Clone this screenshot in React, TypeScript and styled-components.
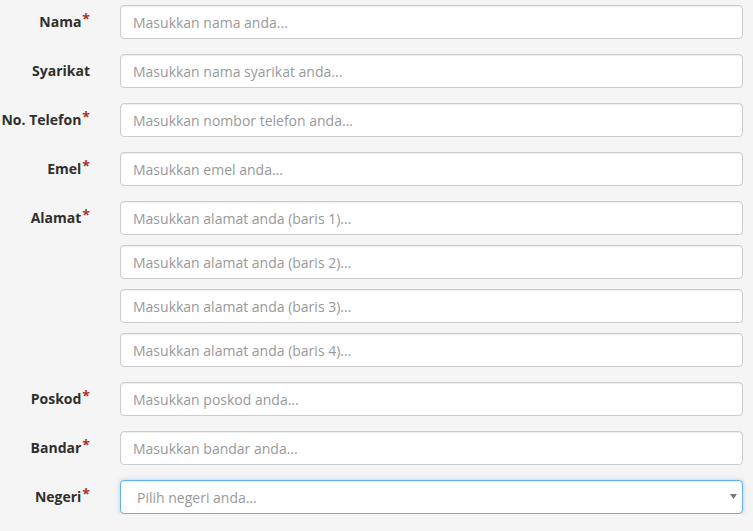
import React from "react";
import styled, { createGlobalStyle } from "styled-components";

const Global = createGlobalStyle`
  html, body { margin: 0; padding: 0; background: #f5f5f5; }
  body { font-family: "Open Sans", "Liberation Sans", sans-serif; font-size: 14px; color: #333; }
  * { box-sizing: border-box; }
`;

const Form = styled.form`
  display: flex;
  flex-direction: column;
  gap: 15px;
  padding: 5px 10px 0 0;
`;

const Row = styled.div`
  display: grid;
  grid-template-columns: 90px 1fr;
  column-gap: 30px;
  align-items: start;
`;

const Label = styled.label`
  display: block;
  text-align: right;
  font-weight: 700;
  font-size: 14px;
  line-height: 20px;
  padding-top: 7px;
  color: #2f2f2f;
  white-space: nowrap;
`;

const Star = styled.span`
  color: #a83232;
  font-size: 14px;
  font-weight: 700;
  position: relative;
  top: -3px;
  margin-left: 1px;
`;

const Fields = styled.div`
  display: flex;
  flex-direction: column;
  gap: 10px;
`;

const Input = styled.input`
  display: block;
  width: 100%;
  height: 34px;
  padding: 6px 12px;
  font-family: "Open Sans", "Liberation Sans", sans-serif;
  font-size: 14px;
  line-height: 20px;
  color: #555;
  background: #fff;
  border: 1px solid #ccc;
  border-radius: 4px;
  box-shadow: inset 0 1px 1px rgba(0, 0, 0, 0.075);
  outline: none;
  &::placeholder { color: #999; }
`;

const SelectWrap = styled.div`
  position: relative;
`;

const Select = styled.select`
  display: block;
  width: 100%;
  height: 34px;
  padding: 6px 30px 6px 16px;
  font-family: "Open Sans", "Liberation Sans", sans-serif;
  font-size: 14px;
  color: #999;
  background: #fff;
  border: 1px solid #66afe9;
  border-radius: 4px;
  box-shadow: inset 0 1px 1px rgba(0, 0, 0, 0.075), 0 0 4px rgba(102, 175, 233, 0.5);
  appearance: none;
  -webkit-appearance: none;
  outline: none;
`;

const Caret = styled.svg`
  position: absolute;
  right: 6px;
  top: 14px;
  pointer-events: none;
`;

type F = { label: string; required?: boolean; placeholders: string[] };

const fields: F[] = [
  { label: "Nama", required: true, placeholders: ["Masukkan nama anda..."] },
  { label: "Syarikat", placeholders: ["Masukkan nama syarikat anda..."] },
  { label: "No. Telefon", required: true, placeholders: ["Masukkan nombor telefon anda..."] },
  { label: "Emel", required: true, placeholders: ["Masukkan emel anda..."] },
  {
    label: "Alamat",
    required: true,
    placeholders: [
      "Masukkan alamat anda (baris 1)...",
      "Masukkan alamat anda (baris 2)...",
      "Masukkan alamat anda (baris 3)...",
      "Masukkan alamat anda (baris 4)...",
    ],
  },
  { label: "Poskod", required: true, placeholders: ["Masukkan poskod anda..."] },
  { label: "Bandar", required: true, placeholders: ["Masukkan bandar anda..."] },
];

export default function App() {
  return (
    <>
      <Global />
      <Form onSubmit={(e) => e.preventDefault()}>
        {fields.map((f) => (
          <Row key={f.label}>
            <Label>
              {f.label}
              {f.required && <Star>*</Star>}
            </Label>
            <Fields>
              {f.placeholders.map((p) => (
                <Input key={p} type="text" placeholder={p} />
              ))}
            </Fields>
          </Row>
        ))}
        <Row>
          <Label>
            Negeri<Star>*</Star>
          </Label>
          <SelectWrap>
            <Select defaultValue="">
              <option value="" disabled>
                Pilih negeri anda...
              </option>
            </Select>
            <Caret width="7" height="5" viewBox="0 0 7 5">
              <path d="M0 0 H7 L3.5 5 Z" fill="#777" />
            </Caret>
          </SelectWrap>
        </Row>
      </Form>
    </>
  );
}
